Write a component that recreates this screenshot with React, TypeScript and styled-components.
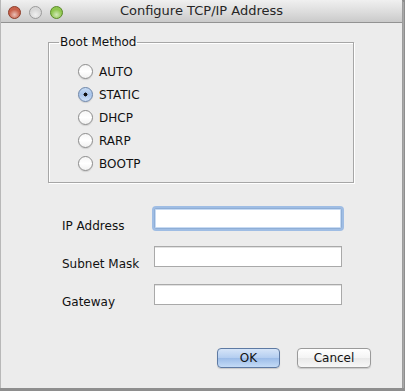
import React from "react";
import styled, { createGlobalStyle } from "styled-components";

const Global = createGlobalStyle`
  html, body { margin: 0; padding: 0; background: #8e8e8e; }
  body { font-family: "DejaVu Sans", "Liberation Sans", sans-serif; }
`;

const Window = styled.div`
  width: 402px;
  height: 388px;
  background: #ececec;
  box-sizing: border-box;
  border-left: 1px solid #b8b8b8;
  display: flex;
  flex-direction: column;
  box-shadow: 1px 1px 0 #9c9c9c, 2px 2px 0 #a8a8a8;
`;

const TitleBar = styled.div`
  height: 22px;
  flex: none;
  display: flex;
  align-items: center;
  position: relative;
  background: linear-gradient(#f0f0f0, #dcdcdc 55%, #cacaca);
  border-bottom: 1px solid #929292;
`;

const Lights = styled.div`
  display: flex;
  gap: 8px;
  padding-left: 7px;
  padding-top: 2px;
`;

const Light = styled.span<{ $c: string; $e: string }>`
  width: 13px;
  height: 13px;
  border-radius: 50%;
  box-sizing: border-box;
  border: 1px solid ${(p) => p.$e};
  background: radial-gradient(circle at 50% 70%, #ffffff99 0, transparent 55%), ${(p) => p.$c};
`;

const Title = styled.div`
  position: absolute;
  left: 0;
  right: 0;
  top: 3px;
  text-align: center;
  font-size: 13px;
  color: #262626;
  line-height: 16px;
  pointer-events: none;
`;

const Body = styled.div`
  flex: 1;
  display: flex;
  flex-direction: column;
  padding: 12px 0 0 47px;
`;

const Group = styled.fieldset`
  margin: 0;
  width: 306px;
  height: 148px;
  box-sizing: border-box;
  border: 1px solid #a6a6a6;
  box-shadow: 1px 1px 0 #fff, inset 1px 1px 0 #fff;
  padding: 0;
`;

const Legend = styled.legend`
  font-size: 12px;
  color: #111;
  padding: 0 1px;
  margin-left: 10px;
  line-height: 14px;
`;

const RadioList = styled.div`
  display: flex;
  flex-direction: column;
  padding: 11px 0 0 29px;
`;

const RadioRow = styled.label`
  display: flex;
  align-items: center;
  height: 23px;
  gap: 6px;
  font-size: 12px;
  color: #111;
`;

const Radio = styled.span<{ $on?: boolean }>`
  width: 15px;
  height: 15px;
  border-radius: 50%;
  box-sizing: border-box;
  border: 1px solid ${(p) => (p.$on ? "#6b84a8" : "#8c8c8c")};
  background: ${(p) =>
    p.$on
      ? "radial-gradient(circle, #111 0 1.8px, transparent 2.2px), linear-gradient(#c5daf3, #a8c4ea 50%, #cfe1f7)"
      : "linear-gradient(#f6f6f6, #ffffff 50%, #f1f1f1)"};
  box-shadow: 0 1px 1px rgba(0,0,0,0.12);
`;

const Form = styled.div`
  display: flex;
  flex-direction: column;
  gap: 13px;
  margin-top: 25px;
  padding-left: 14px;
`;

const Row = styled.div`
  display: flex;
  align-items: flex-start;
`;

const Label = styled.span`
  width: 92px;
  font-size: 12px;
  line-height: 14px;
  color: #111;
  padding-top: 11px;
`;

const Input = styled.div<{ $focus?: boolean }>`
  width: 188px;
  height: 21px;
  box-sizing: border-box;
  background: #fff;
  border: 1px solid ${(p) => (p.$focus ? "#8faed6" : "#a9a9a9")};
  box-shadow: ${(p) => (p.$focus ? "0 0 0 2px #9fbde4, inset 0 0 0 1px #c8dbf3" : "inset 0 1px 0 #e2e2e2")};
  border-radius: ${(p) => (p.$focus ? "2px" : "0")};
`;

const Buttons = styled.div`
  display: flex;
  justify-content: flex-end;
  gap: 17px;
  margin-top: 39px;
  padding-right: 31px;
`;

const Button = styled.div<{ $primary?: boolean; $w: number }>`
  width: ${(p) => p.$w}px;
  height: 20px;
  box-sizing: border-box;
  border-radius: 4px;
  border: 1px solid ${(p) => (p.$primary ? "#5e7aa3" : "#9a9a9a")};
  background: ${(p) =>
    p.$primary
      ? "linear-gradient(#d6e5f8, #b3cdf0 50%, #9cbce8 51%, #c4dbf6)"
      : "linear-gradient(#ffffff, #f4f4f4 50%, #e9e9e9 51%, #f7f7f7)"};
  box-shadow: 0 1px 1px rgba(0,0,0,0.15);
  font-size: 12px;
  color: #111;
  display: flex;
  align-items: center;
  justify-content: center;
`;

export default function App() {
  const opts = ["AUTO", "STATIC", "DHCP", "RARP", "BOOTP"];
  return (
    <>
      <Global />
      <Window>
        <TitleBar>
          <Lights>
            <Light $c="#c8614a" $e="#8d3f2c" />
            <Light $c="#d8d8d8" $e="#9a9a9a" />
            <Light $c="#8fc64e" $e="#5c8a2c" />
          </Lights>
          <Title>Configure TCP/IP Address</Title>
        </TitleBar>
        <Body>
          <Group>
            <Legend>Boot Method</Legend>
            <RadioList>
              {opts.map((o) => (
                <RadioRow key={o}>
                  <Radio $on={o === "STATIC"} />
                  {o}
                </RadioRow>
              ))}
            </RadioList>
          </Group>
          <Form>
            <Row>
              <Label>IP Address</Label>
              <Input $focus />
            </Row>
            <Row>
              <Label>Subnet Mask</Label>
              <Input />
            </Row>
            <Row>
              <Label>Gateway</Label>
              <Input />
            </Row>
          </Form>
          <Buttons>
            <Button $primary $w={63}>OK</Button>
            <Button $w={74}>Cancel</Button>
          </Buttons>
        </Body>
      </Window>
    </>
  );
}
